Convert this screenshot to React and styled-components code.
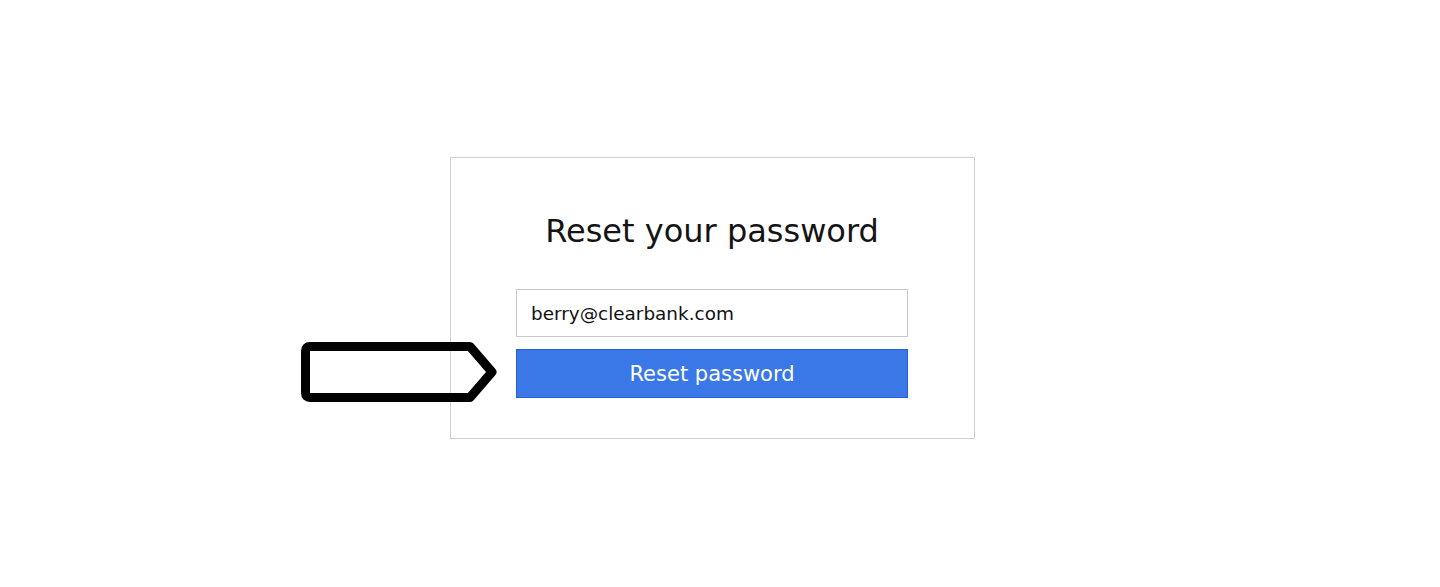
import React, { useState } from 'react';
import styled, { createGlobalStyle } from 'styled-components';

const GlobalStyles = createGlobalStyle`
  html, body {
    margin: 0;
    padding: 0;
    background: #ffffff;
  }
  body {
    font-family: "DejaVu Sans", Verdana, sans-serif;
    color: #111111;
  }
`;

const Page = styled.main`
  position: relative;
  height: 587px;
  padding: 157px 0 0 450px;
  box-sizing: border-box;
`;

const Card = styled.section`
  position: relative;
  width: 525px;
  box-sizing: border-box;
  border: 1px solid #cfcfcf;
  padding: 52px 66px 40px 65px;
`;

const Title = styled.h1`
  margin: 0 0 37px;
  font-size: 32px;
  font-weight: normal;
  line-height: 42px;
  text-align: center;
  color: #141414;
`;

const Form = styled.form`
  display: flex;
  flex-direction: column;
  gap: 12px;
`;

const EmailInput = styled.input`
  box-sizing: border-box;
  width: 100%;
  height: 48px;
  padding: 0 14px;
  border: 1px solid #c9c9c9;
  font-family: inherit;
  font-size: 18.4px;
  color: #111111;
  outline: none;
`;

const SubmitButton = styled.button`
  box-sizing: border-box;
  width: 100%;
  height: 49px;
  border: 1px solid #2a5fd3;
  background: #3b78e7;
  color: #ffffff;
  font-family: inherit;
  font-size: 21px;
  cursor: pointer;
`;

const Pointer = styled.svg`
  position: absolute;
  left: -151px;
  top: 183px;
`;

function App() {
  const [email, setEmail] = useState('berry@clearbank.com');
  return (
    <Page>
      <GlobalStyles />
      <Card>
        <Title>Reset your password</Title>
        <Form onSubmit={e => e.preventDefault()}>
          <EmailInput
            type="email"
            value={email}
            onChange={e => setEmail(e.target.value)}
          />
          <SubmitButton type="submit">Reset password</SubmitButton>
        </Form>
        <Pointer width="202" height="62" viewBox="0 0 202 62">
          <path
            d="M10 5.5 H170 L192 31 L170 56.5 H10 Q5.5 56.5 5.5 52 V10 Q5.5 5.5 10 5.5 Z"
            fill="none"
            stroke="#000"
            strokeWidth="9"
            strokeLinejoin="round"
          />
        </Pointer>
      </Card>
    </Page>
  );
}

export default App;
